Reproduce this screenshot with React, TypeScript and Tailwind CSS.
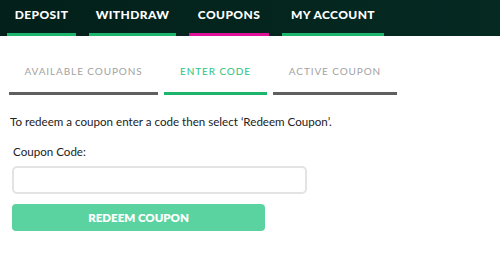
import React from 'react';

const nav = [
  { label: 'DEPOSIT', w: 'w-[69px]', bar: 'border-[#1db56b]' },
  { label: 'WITHDRAW', w: 'w-[87px]', bar: 'border-[#1db56b]' },
  { label: 'COUPONS', w: 'w-[80px]', bar: 'border-[#e0109a]' },
  { label: 'MY ACCOUNT', w: 'w-[102px]', bar: 'border-[#1db56b]' },
];

const tabs = [
  { label: 'AVAILABLE COUPONS', w: 'w-[149px]', active: false },
  { label: 'ENTER CODE', w: 'w-[103px]', active: true },
  { label: 'ACTIVE COUPON', w: 'w-[124px]', active: false },
];

export default function App() {
  return (
    <div className="w-[500px] h-[260px] bg-white font-['Lato',sans-serif] overflow-hidden">
      <div className="h-[36px] bg-gradient-to-r from-[#03201a] to-[#052a22] flex items-end gap-[13px] pl-[7px]">
        {nav.map((n) => (
          <div
            key={n.label}
            className={`${n.w} h-[36px] flex items-center justify-center border-b-[3px] ${n.bar} text-white font-black text-[12px] tracking-[0.4px] pb-[3px]`}
          >
            {n.label}
          </div>
        ))}
      </div>

      <div className="flex gap-[6px] pl-[9px] mt-[28px]">
        {tabs.map((t) => (
          <div
            key={t.label}
            className={`${t.w} h-[31px] flex items-start justify-center border-b-[3px] text-[10px] tracking-[0.9px] ${
              t.active ? 'border-[#1db56b] text-[#2cc37b]' : 'border-[#5f5f5f] text-[#a2a2a2]'
            }`}
          >
            {t.label}
          </div>
        ))}
      </div>

      <p className="text-[11.6px] text-[#222] ml-[10px] mt-[19px] leading-[16px]">
        To redeem a coupon enter a code then select ‘Redeem Coupon’.
      </p>
      <p className="text-[11.6px] text-[#222] ml-[13px] mt-[14px] leading-[16px]">Coupon Code:</p>

      <div className="ml-[12px] mt-[6px] w-[295px] h-[28px] border-2 border-[#e3e3e3] rounded-[5px] bg-white" />

      <button className="ml-[12px] mt-[10px] w-[253px] h-[27px] bg-[#5bd3a0] rounded-[4px] text-white font-extrabold text-[11.5px] flex items-center justify-center">
        REDEEM COUPON
      </button>
    </div>
  );
}
